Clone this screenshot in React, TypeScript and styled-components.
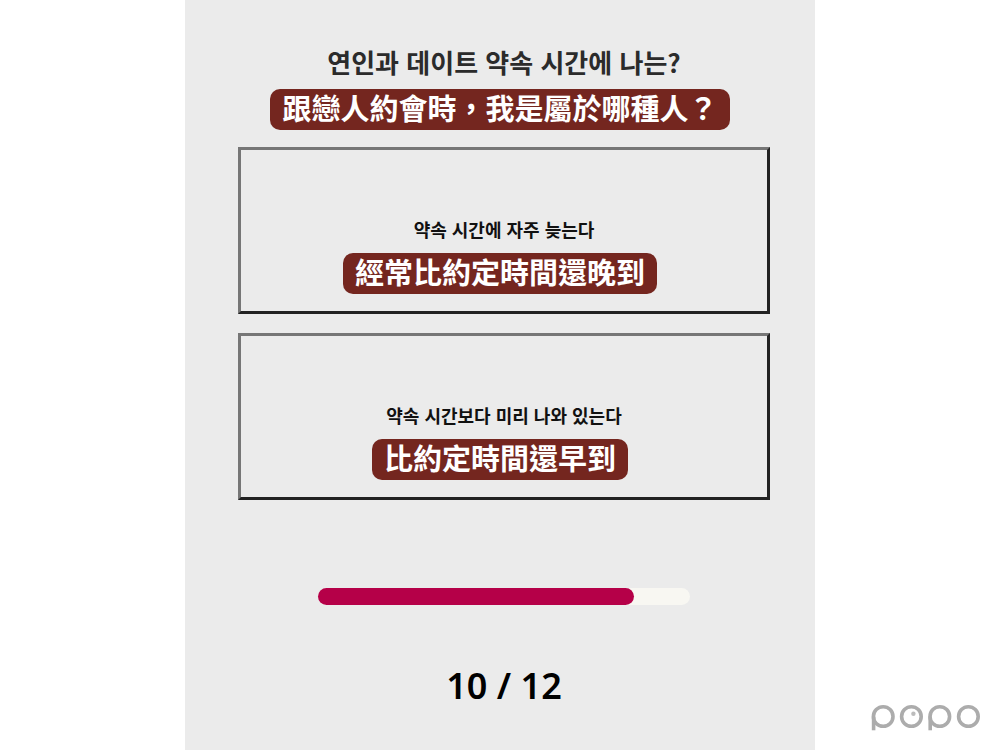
import React from "react";
import styled, { createGlobalStyle } from "styled-components";

const GlobalStyle = createGlobalStyle`
  *, *::before, *::after { box-sizing: border-box; }
  body {
    margin: 0;
    background: #ffffff;
    font-family: "Noto Sans CJK KR", "Noto Sans", sans-serif;
  }
`;

const Page = styled.div`
  display: grid;
  grid-template-columns: 1fr 63% 1fr;
  min-height: 100vh;
`;

const Panel = styled.main`
  grid-column: 2;
  display: flex;
  flex-direction: column;
  align-items: center;
  padding: 42px 45px 40px 53px;
  background: #ebebeb;
`;

const Question = styled.h1`
  margin: 0 0 7px;
  font-size: 26px;
  line-height: 40px;
  font-weight: 700;
  color: #2b2b2b;
  text-align: center;
`;

const Caption = styled.span`
  display: block;
  margin-right: 8px;
  padding: 0 12px 4px;
  border-radius: 10px;
  background: #74261f;
  color: #ffffff;
  font-family: "Noto Sans CJK TC", sans-serif;
  font-size: 29px;
  line-height: 37px;
  font-weight: 700;
  text-align: center;
`;

const Choices = styled.div`
  display: flex;
  flex-direction: column;
  gap: 19px;
  width: 100%;
  margin-top: 17px;
`;

const Choice = styled.button`
  display: flex;
  flex-direction: column;
  align-items: center;
  justify-content: flex-end;
  gap: 11px;
  width: 100%;
  min-height: 167px;
  padding: 17px;
  border: 3px solid;
  border-color: #767676 #222222 #222222 #767676;
  border-radius: 0;
  background: transparent;
  color: #111111;
  font-family: inherit;
  cursor: pointer;
`;

const ChoiceText = styled.span`
  font-size: 18px;
  line-height: 26px;
  font-weight: 700;
`;

const Track = styled.div`
  width: 70%;
  height: 17px;
  margin-top: 88px;
  border-radius: 9px;
  background: #f8f7f2;
`;

const Fill = styled.div`
  height: 100%;
  border-radius: 9px;
  background: #b50048;
`;

const Counter = styled.p`
  margin: 57px 0 0;
  font-family: "Noto Sans", sans-serif;
  font-size: 36px;
  line-height: 48px;
  font-weight: 600;
  color: #000000;
`;

const Logo = styled.svg`
  grid-column: 3;
  place-self: end;
  width: 110px;
  height: 28px;
  margin: 0 19px 18px 0;
`;

const choices = [
  { text: "약속 시간에 자주 늦는다", caption: "經常比約定時間還晚到" },
  { text: "약속 시간보다 미리 나와 있는다", caption: "比約定時間還早到" },
];

export default function App() {
  const progress = 85;
  return (
    <>
      <GlobalStyle />
      <Page>
        <Panel>
          <Question lang="ko">연인과 데이트 약속 시간에 나는?</Question>
          <Caption lang="zh-Hant">跟戀人約會時，我是屬於哪種人？</Caption>
          <Choices>
            {choices.map((choice) => (
              <Choice key={choice.text} type="button">
                <ChoiceText lang="ko">{choice.text}</ChoiceText>
                <Caption lang="zh-Hant">{choice.caption}</Caption>
              </Choice>
            ))}
          </Choices>
          <Track
            role="progressbar"
            aria-label="10 / 12"
            aria-valuemin={0}
            aria-valuemax={12}
            aria-valuenow={10}
          >
            <Fill style={{ width: `${progress}%` }} />
          </Track>
          <Counter>10 / 12</Counter>
        </Panel>
        <Logo viewBox="0 0 110 28" role="img" aria-label="popo">
          <g fill="none" stroke="#acacac" strokeWidth="3.6">
            <circle cx="12.2" cy="12.5" r="9.8" />
            <path d="M2.6 12.5v13.8" />
            <circle cx="40.4" cy="12.5" r="9.8" />
            <circle cx="68.8" cy="12.5" r="9.8" />
            <path d="M59.2 12.5v13.8" />
            <circle cx="97.4" cy="12.5" r="9.8" />
          </g>
          <circle cx="42.4" cy="9.8" r="2.2" fill="#bcbcbc" />
        </Logo>
      </Page>
    </>
  );
}
